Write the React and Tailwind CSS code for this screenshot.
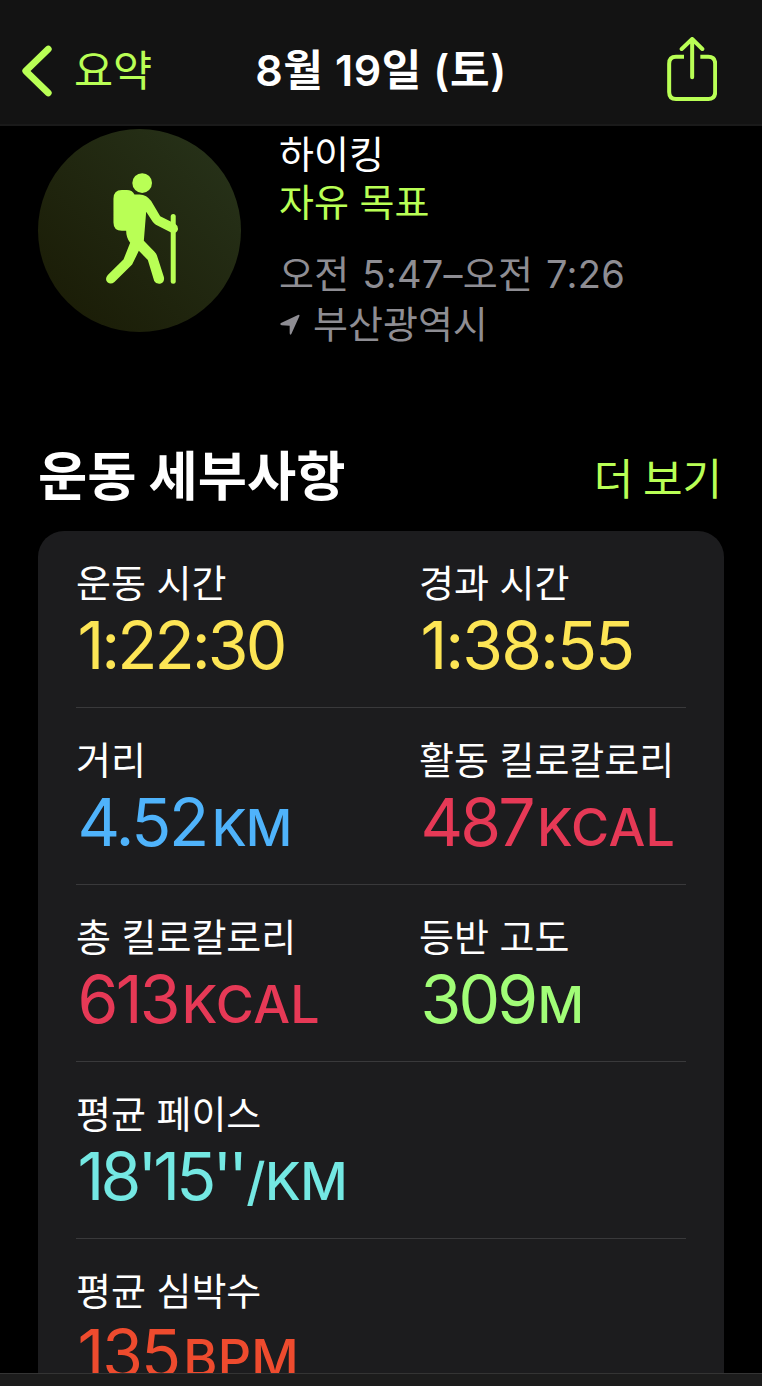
import React from 'react';
import clsx from 'clsx';

const rows = [
  [
    { label: '운동 시간', value: '1:22:30', color: 'text-[#fde555]', tracking: 'tracking-[-3px]' },
    { label: '경과 시간', value: '1:38:55', color: 'text-[#fde555]', tracking: 'tracking-[-2px]' },
  ],
  [
    {
      label: '거리',
      value: '4.52',
      unit: 'KM',
      color: 'text-[#4fb3fb]',
      tracking: 'tracking-[-2.4px]',
      unitStyle: 'text-[51px] tracking-[-1px] ml-px',
    },
    { label: '활동 킬로칼로리', value: '487', unit: 'KCAL', color: 'text-[#e63956]' },
  ],
  [
    { label: '총 킬로칼로리', value: '613', unit: 'KCAL', color: 'text-[#e63956]' },
    { label: '등반 고도', value: '309', unit: 'M', color: 'text-[#a1fd77]', unitStyle: 'text-[51px] -ml-[2px]' },
  ],
  [
    {
      label: '평균 페이스',
      value: "18'15''",
      unit: '/KM',
      color: 'text-[#74e8e3]',
      tracking: 'tracking-[-3.9px]',
      unitStyle: 'text-[52px] tracking-[-0.5px] -ml-[2px]',
    },
  ],
  [{ label: '평균 심박수', value: '135', unit: 'BPM', color: 'text-[#ee4b2e]', tracking: 'tracking-[-2px]' }],
];

const BackIcon = () => (
  <svg className="h-[52px] w-[30px] overflow-visible" viewBox="0 0 90 156" fill="none">
    <path
      d="M82 12 L14 78 L82 144"
      stroke="currentColor"
      strokeWidth="20"
      strokeLinecap="round"
      strokeLinejoin="round"
    />
  </svg>
);

const ShareIcon = () => (
  <svg className="h-16 w-[50px]" viewBox="857 111 150 192" fill="none">
    <g stroke="currentColor" strokeWidth="12">
      <path d="M908 170.500 H884 Q863.500 170.500 863.500 191 V276 Q863.500 297 884 297 H981 Q1001.500 297 1001.500 276 V191 Q1001.500 170.500 981 170.500 H957" />
      <path d="M932.500 232 V118 M901 147 L932.500 117 L963 147" strokeLinecap="round" strokeLinejoin="round" />
    </g>
  </svg>
);

const HikerIcon = () => (
  <svg className="size-full" viewBox="24 28 608 608" fill="currentColor">
    <circle cx="336" cy="190" r="29.500" />
    <path d="M275 211 H290 Q306 211 313 224 H328 Q350 225 363 244 L390 289 L435 312 Q445 319 443 330 Q438 343 424 339 L377 315 Q371 311 367 305 L348 276 L341 363 L373 396 Q379 402 381 409 L401 471 Q404 485 392 491 Q378 494 372 483 L353 420 L326 393 L306 434 L253 486 Q242 495 232 487 Q223 477 233 465 L280 419 L300 369 Q288 354 288 333 H275 Q250 333 250 308 V237 Q250 211 275 211 Z" />
    <path d="M429 290 V484" stroke="currentColor" strokeWidth="15" strokeLinecap="round" />
  </svg>
);

const LocationIcon = () => (
  <svg className="mt-[5px] ml-[1px] h-[21px] w-5" viewBox="0 0 60 63" fill="currentColor">
    <path d="M3 27 L54 3 Q60 1 58 7 L34 60 Q30 65 29 58 V35 L5 34 Q-2 31 3 27 Z" />
  </svg>
);

const Stat = ({ label, value, unit, color, tracking, unitStyle }) => (
  <div className="w-[343px] shrink-0 whitespace-nowrap pt-6">
    <div className="h-[52px] text-[38px] leading-[52px] [word-spacing:2px]">{label}</div>
    <div
      className={clsx(
        "pl-[1.5px] pt-px font-['Inter','Noto_Sans_CJK_KR',sans-serif] text-[66px] leading-[74px]",
        color,
        tracking || 'tracking-[-2.8px]'
      )}
    >
      {value}
      {unit && (
        <span className={clsx('inline-block pl-1 leading-none font-medium', unitStyle || 'text-[52px] tracking-[0.3px]')}>
          {unit}
        </span>
      )}
    </div>
  </div>
);

const App = () => {
  return (
    <div className="flex h-[1386px] w-[762px] flex-col overflow-hidden bg-black font-['Noto_Sans_CJK_KR',sans-serif] text-white">
      <header className="grid h-[126px] shrink-0 grid-cols-3 items-center whitespace-nowrap border-b-2 border-[#1a1a1a] bg-[#131313] pt-[18px]">
        <button className="flex items-center gap-6 pl-[21px] text-[42.5px] leading-[52px] text-[#b9ff55]">
          <BackIcon />
          <span className="-ml-px pb-[6px]">요약</span>
        </button>
        <h1 className="pb-[2px] text-center font-['Inter','Noto_Sans_CJK_KR',sans-serif] text-[43px] leading-[52px] font-semibold tracking-[0.6px]">
          8월 19일 (토)
        </h1>
        <div className="flex justify-end pr-[45px] pb-1 text-[#b9ff55]">
          <ShareIcon />
        </div>
      </header>

      <main className="min-h-0 flex-1 overflow-hidden px-[38px] pt-[3px]">
        <section className="flex h-[311px] gap-[38px] whitespace-nowrap">
          <div className="size-[203px] shrink-0 rounded-full bg-linear-to-tr from-[#191a05] to-[#28341b] text-[#b9ff55]">
            <HikerIcon />
          </div>
          <div className="-mt-px text-[38px] leading-[48px] [word-spacing:2px]">
            <p>하이킹</p>
            <p className="text-[#b9ff55]">자유 목표</p>
            <p className="mt-[26px] font-['Inter','Noto_Sans_CJK_KR',sans-serif] tracking-[0.25px] text-[#8e8d93]">
              오전 5:47–오전 7:26
            </p>
            <p className="flex items-center gap-[13px] text-[#8e8d93]">
              <LocationIcon />
              부산광역시
            </p>
          </div>
        </section>

        <section>
          <div className="flex h-[91px] items-center justify-between whitespace-nowrap pr-[2px] pb-[26px]">
            <h2 className="text-[53.5px] leading-[65px] font-bold">운동 세부사항</h2>
            <a className="pt-[6px] text-[43px] leading-[52px] text-[#b9ff55]">더 보기</a>
          </div>
          <div className="h-[900px] rounded-[26px] bg-[#1c1c1e] px-[38px]">
            {rows.map((row, i) => (
              <div key={i} className="flex h-[177px] border-b border-[#39393b]">
                {row.map((stat) => (
                  <Stat key={stat.label} {...stat} />
                ))}
              </div>
            ))}
          </div>
        </section>
      </main>

      <footer className="h-[13px] shrink-0 border-t border-[#343434] bg-[#1c1c1c]" />
    </div>
  );
};

export default App;
